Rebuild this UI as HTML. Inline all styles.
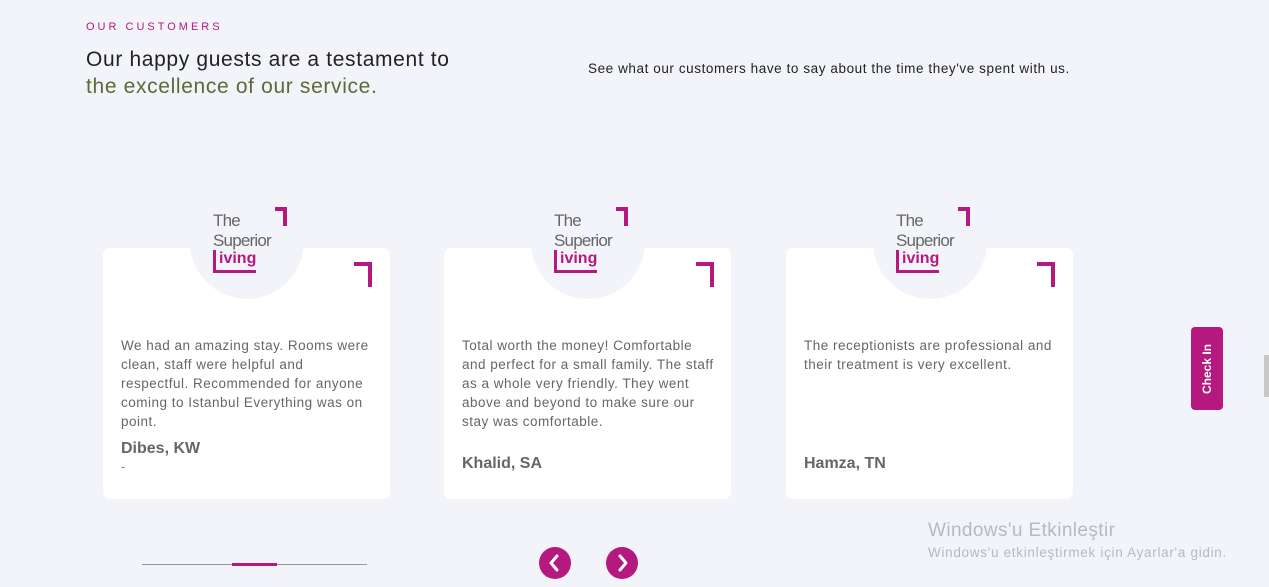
<!DOCTYPE html>
<html><head><meta charset="utf-8"><style>
*{margin:0;padding:0;box-sizing:border-box}
body{width:1269px;height:587px;background:#f3f4f9;font-family:"Liberation Sans",sans-serif;position:relative;overflow:hidden}
.a{position:absolute}
.eyebrow{left:86px;top:21px;font-size:11px;letter-spacing:3px;color:#b5187f}
.h1{left:86px;top:46px;font-size:21px;color:#222;line-height:27px;letter-spacing:0.65px}
.h1 span{color:#5b6b35}
.sub{left:588px;top:61px;font-size:13.5px;color:#222;letter-spacing:0.58px}
.card{width:287px;height:251px;top:248px;background:#fff;border-radius:7px}
.circ{width:114px;height:114px;border-radius:50%;background:#f3f4f9;top:185px}
.logo{font-size:17px;color:#666;line-height:20px;letter-spacing:-0.8px}
.liv{color:#b5187f;font-weight:bold;font-size:16px}
.br{width:12px;height:19px;border-top:4px solid #b5187f;border-right:4px solid #b5187f}
.cbr{width:18px;height:25px;border-top:4px solid #b5187f;border-right:4px solid #b5187f}
.txt{font-size:13.5px;color:#666;line-height:19px;width:280px;letter-spacing:0.5px;white-space:nowrap}
.name{font-size:16px;color:#666;font-weight:bold}
.arr{width:32px;height:32px;border-radius:50%;background:#b5187f;top:547px}
</style></head><body>
<div class="a eyebrow">OUR CUSTOMERS</div>
<div class="a h1">Our happy guests are a testament to<br><span>the excellence of our service.</span></div>
<div class="a sub">See what our customers have to say about the time they've spent with us.</div>

<div class="a card" style="left:103px"></div>
<div class="a card" style="left:444px"></div>
<div class="a card" style="left:786px"></div>

<div class="a circ" style="left:190px"></div>
<div class="a circ" style="left:531px"></div>
<div class="a circ" style="left:873px"></div>

<div class="a logo" style="left:213px;top:211px">The<br>Superior</div>
<div class="a liv" style="left:213px;top:250px;border-left:3px solid #b5187f;border-bottom:3px solid #b5187f;padding-left:3px;height:23px;line-height:18px">iving</div>
<div class="a br" style="left:275px;top:207px"></div>
<div class="a cbr" style="left:354px;top:262px"></div>

<div class="a logo" style="left:554px;top:211px">The<br>Superior</div>
<div class="a liv" style="left:554px;top:250px;border-left:3px solid #b5187f;border-bottom:3px solid #b5187f;padding-left:3px;height:23px;line-height:18px">iving</div>
<div class="a br" style="left:616px;top:207px"></div>
<div class="a cbr" style="left:696px;top:262px"></div>

<div class="a logo" style="left:896px;top:211px">The<br>Superior</div>
<div class="a liv" style="left:896px;top:250px;border-left:3px solid #b5187f;border-bottom:3px solid #b5187f;padding-left:3px;height:23px;line-height:18px">iving</div>
<div class="a br" style="left:958px;top:207px"></div>
<div class="a cbr" style="left:1037px;top:262px"></div>

<div class="a txt" style="left:121px;top:336px">We had an amazing stay. Rooms were<br>clean, staff were helpful and<br>respectful. Recommended for anyone<br>coming to Istanbul Everything was on<br>point.</div>
<div class="a name" style="left:121px;top:440px">Dibes, KW</div>
<div class="a" style="left:121px;top:459px;color:#888;font-size:13px">-</div>

<div class="a txt" style="left:462px;top:336px">Total worth the money! Comfortable<br>and perfect for a small family. The staff<br>as a whole very friendly. They went<br>above and beyond to make sure our<br>stay was comfortable.</div>
<div class="a name" style="left:462px;top:455px">Khalid, SA</div>

<div class="a txt" style="left:804px;top:336px">The receptionists are professional and<br>their treatment is very excellent.</div>
<div class="a name" style="left:804px;top:455px">Hamza, TN</div>

<div class="a" style="left:142px;top:564px;width:225px;height:1px;background:#999"></div>
<div class="a" style="left:232px;top:563px;width:45px;height:3px;background:#b5187f"></div>

<div class="a arr" style="left:539px"><svg width="32" height="32"><path d="M18 9l-6 7 6 7" stroke="#fff" stroke-width="3" fill="none" stroke-linecap="round" stroke-linejoin="round"/></svg></div>
<div class="a arr" style="left:606px"><svg width="32" height="32"><path d="M14 9l6 7-6 7" stroke="#fff" stroke-width="3" fill="none" stroke-linecap="round" stroke-linejoin="round"/></svg></div>

<div class="a" style="left:1191px;top:327px;width:32px;height:83px;background:#b5187f;border-radius:4px"></div>
<div class="a" style="left:1191px;top:327px;width:32px;height:83px;display:flex;align-items:center;justify-content:center"><div style="transform:rotate(-90deg);color:#fff;font-size:12px;font-weight:bold;white-space:nowrap">Check In</div></div>
<div class="a" style="left:1264px;top:355px;width:5px;height:42px;background:#c8c8c8"></div>

<div class="a" style="left:928px;top:520px;font-size:19px;color:#b8b9bd;letter-spacing:0.4px">Windows'u Etkinleştir</div>
<div class="a" style="left:928px;top:545px;font-size:13.5px;color:#b8b9bd;letter-spacing:0.7px">Windows'u etkinleştirmek için Ayarlar'a gidin.</div>
</body></html>
